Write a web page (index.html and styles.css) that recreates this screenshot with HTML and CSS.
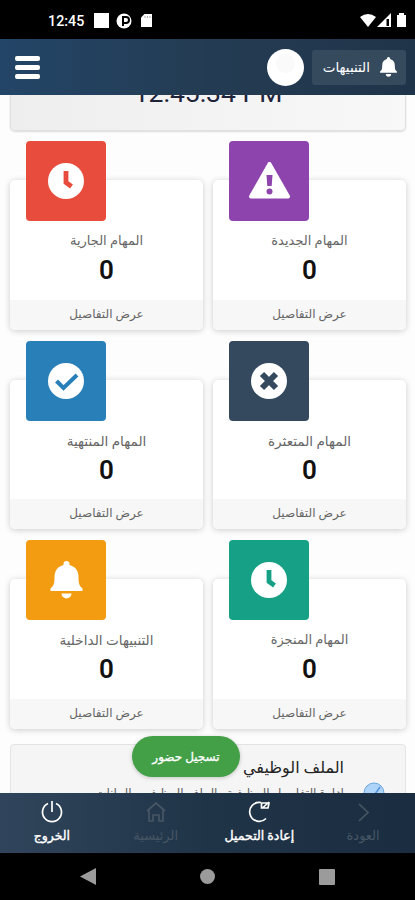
FILE: index.html
```html
<!DOCTYPE html>
<html lang="ar">
<head>
<meta charset="utf-8">
<title>لوحة المهام</title>
<link rel="stylesheet" href="styles.css">
</head>
<body>
<svg class="defs" width="0" height="0">
  <symbol id="bell" viewBox="0 0 32 38"><path d="M16 0a3 3 0 0 1 3 3v1c6 1.500 9 6 9 12 0 7 1 9 4 11.500V30H0v-2.500C3 25 4 23 4 16 4 10 7 5.500 13 4V3a3 3 0 0 1 3-3ZM11 32.500h10a5 5 0 0 1-10 0Z" fill="#fff"/></symbol>
  <symbol id="clock" viewBox="0 0 36 36"><circle cx="18" cy="18" r="18" fill="#fff"/><path d="M18 8v11.500l5.500 4" fill="none" stroke="currentColor" stroke-width="4.800"/></symbol>
</svg>
<div class="phone">
  <div class="status">
    <span class="time">12:45</span>
    <svg class="notes" width="60" height="18" viewBox="0 0 60 18"><path d="M1 1h15v15H1z" fill="#fff"/><circle cx="31" cy="9" r="7.500" fill="#fff"/><path d="M30 14V5h3a3 3 0 0 1 0 6h-3" fill="none" stroke="#000" stroke-width="2"/><path d="M51.500 2H59v13H48V5.500z" fill="#fff"/><path d="M52 4v2m2.500-2v2M57 4v2" stroke="#aaa" stroke-width="1"/></svg>
    <svg class="signal" width="48" height="16" viewBox="0 0 48 16"><path d="M0 4Q8-2 16 4L8 14z" fill="#fff"/><path d="M31 0v14H17z" fill="#fff"/><path d="M26.500 6h2.500v7h-2.500z" fill="#000"/><path d="M37 2h2V0h5v2h2v12h-9z" fill="#fff"/></svg>
  </div>
  <header class="topbar">
    <div class="menu"><i></i><i></i><i></i></div>
    <div class="avatar"><i></i></div>
    <div class="alerts" dir="rtl"><svg width="17" height="20"><use href="#bell"/></svg><span>التنبيهات</span></div>
  </header>
  <main class="content">
    <section class="clockbox"><span>12:45:34 PM</span></section>
    <section class="grid">
      <article class="card"><div class="tile red"><svg width="36" height="36"><use href="#clock"/></svg></div><p class="label" dir="rtl">المهام الجارية</p><b>0</b><a dir="rtl">عرض التفاصيل</a></article>
      <article class="card"><div class="tile purple"><svg width="43" height="38" viewBox="0 0 43 38"><path d="M21.500 2 40 34.500H3z" fill="#fff" stroke="#fff" stroke-width="4" stroke-linejoin="round"/><path d="M18.500 13h6l-.8 11h-4.400z" fill="currentColor"/><circle cx="21.500" cy="29.500" r="3" fill="currentColor"/></svg></div><p class="label" dir="rtl">المهام الجديدة</p><b>0</b><a dir="rtl">عرض التفاصيل</a></article>
      <article class="card"><div class="tile blue"><svg width="36" height="36" viewBox="0 0 36 36"><circle cx="18" cy="18" r="18" fill="#fff"/><path d="m8.500 18 7 7L29 12" fill="none" stroke="currentColor" stroke-width="4"/></svg></div><p class="label wide" dir="rtl">المهام المنتهية</p><b>0</b><a dir="rtl">عرض التفاصيل</a></article>
      <article class="card"><div class="tile navy"><svg width="36" height="36" viewBox="0 0 36 36"><circle cx="18" cy="18" r="18" fill="#fff"/><path d="m11 11 14 14m0-14L11 25" stroke="currentColor" stroke-width="6"/></svg></div><p class="label wide" dir="rtl">المهام المتعثرة</p><b>0</b><a dir="rtl">عرض التفاصيل</a></article>
      <article class="card"><div class="tile orange"><svg width="33" height="38"><use href="#bell"/></svg></div><p class="label wide" dir="rtl">التنبيهات الداخلية</p><b>0</b><a dir="rtl">عرض التفاصيل</a></article>
      <article class="card"><div class="tile green"><svg width="36" height="36"><use href="#clock"/></svg></div><p class="label" dir="rtl">المهام المنجزة</p><b>0</b><a dir="rtl">عرض التفاصيل</a></article>
    </section>
    <section class="profile" dir="rtl">
      <svg width="22" height="22" viewBox="0 0 22 22"><circle cx="11" cy="11" r="10" fill="#aed4fa" stroke="#6ba6df"/><path d="m5 12 5 3 7-10" fill="none" stroke="#5b9bd8" stroke-width="1.800"/></svg>
      <div><h2>الملف الوظيفي</h2><p>إدارة التفاصيل الوظيفية والملف الوظيفي والبيانات</p></div>
    </section>
    <button class="attend" dir="rtl">تسجيل حضور</button>
  </main>
  <nav class="tabs">
    <div><svg width="24" height="24" viewBox="0 0 24 24"><path d="M8 3.500a9.500 9.500 0 1 0 8 0M12 1v11"/></svg><span>الخروج</span></div>
    <div class="off"><svg width="24" height="24" viewBox="0 0 24 24"><path d="m3 11 9-8 9 8M5 9.500V21h4v-6h6v6h4V9.500"/></svg><span>الرئيسية</span></div>
    <div><svg width="24" height="24" viewBox="0 0 24 24"><path d="M14 2.500a9.500 9.500 0 1 0 5 16M14.500 8V3H22l-1 5zm1 0L22 2"/></svg><span>إعادة التحميل</span></div>
    <div class="off"><svg width="24" height="24" viewBox="0 0 24 24"><path d="m8 4 9 8.500L8 21"/></svg><span>العودة</span></div>
  </nav>
  <footer class="system">
    <svg width="16" height="18" viewBox="0 0 16 18"><path d="M16 0v17L0 8.500z" fill="#9b9b9b"/></svg><i class="home"></i><i class="recent"></i>
  </footer>
</div>
</body>
</html>
```
FILE: styles.css
```css
* { box-sizing: border-box; }
body { margin: 0; font-family: Roboto, "DejaVu Sans", sans-serif; background: #000; }
p, h2 { margin: 0; }
.defs { position: absolute; }
.phone { width: 415px; height: 900px; display: flex; flex-direction: column; overflow: hidden; }
.status { height: 39px; flex: none; background: #000; color: #fff; display: flex; align-items: center; padding: 2px 7px 0 48px; }
.time { font-size: 14.300px; font-weight: 500; width: 45px; }
.signal { margin-left: auto; }
.topbar { height: 56px; flex: none; display: flex; align-items: center; padding: 0 9px 0 15px; background: linear-gradient(90deg, #234567, #243c53 50%, #203449); }
.menu { width: 25px; display: grid; gap: 4px; margin-right: auto; }
.menu i { height: 5px; border-radius: 2px; background: #fff; }
.avatar { width: 37px; height: 37px; border-radius: 50%; background: #fff; margin-right: 8px; padding: 5px 9px; }
.avatar i { display: block; width: 19px; height: 19px; border-radius: 50%; background: #fafafa; }
.alerts { width: 94px; height: 35px; border-radius: 3px; background: #364a5d; color: #fff; display: flex; align-items: center; gap: 10px; padding-right: 9px; font-size: 13.500px; white-space: nowrap; }
.content { height: 698px; flex: none; position: relative; overflow: hidden; background: #fdfdfd; padding: 0 9px 0 10px; }
.clockbox { height: 36px; border: 1px solid #e0e0e0; border-top: 0; border-radius: 0 0 5px 5px; background: linear-gradient(90deg, #eee, #f8f8f8); box-shadow: 0 1px 2px #0002; overflow: hidden; color: #20243a; text-align: center; font-size: 26.500px; line-height: 28px; }
.clockbox span { display: block; margin-top: -16px; }
.grid { display: grid; grid-template-columns: 193px 193px; column-gap: 10px; row-gap: 50px; padding-top: 49px; }
.card { height: 149.500px; border-radius: 5px; background: #fff; box-shadow: 0 1px 6px #0003; display: flex; flex-direction: column; align-items: center; color: #666; }
.tile { width: 80px; height: 80px; margin: -39px 0 0 16px; align-self: flex-start; flex: none; border-radius: 4px; display: grid; place-items: center; background: currentColor; }
.red { color: #e74c3c; }
.purple { color: #8e44ad; }
.blue { color: #2980b9; }
.navy { color: #34495e; }
.orange { color: #f39c12; }
.green { color: #16a085; }
.label { font-size: 13px; line-height: 18px; margin-top: 11px; white-space: nowrap; }
.label.wide { font-size: 13.600px; }
.card b { color: #111; font-size: 26px; font-weight: 600; line-height: 30px; margin-top: 5px; }
.card a { width: 100%; height: 30px; margin-top: auto; background: #f7f7f7; border-radius: 0 0 5px 5px; text-align: center; font-size: 12px; line-height: 29px; }
.profile { height: 100px; margin-top: 15px; padding: 11px 20px 0 0; border: 1px solid #e3e3e3; border-radius: 4px; background: #f5f5f5; display: flex; gap: 19px; }
.profile svg { margin-top: 26px; flex: none; }
.profile h2 { color: #222; font-size: 16px; font-weight: 400; line-height: 24px; white-space: nowrap; }
.profile p { color: #666; font-size: 12.200px; line-height: 18px; margin-top: 4px; white-space: nowrap; }
.attend { position: absolute; left: 132px; top: 641px; width: 108px; height: 41px; border: 0; border-radius: 21px; background: #43a047; color: #fff; font: 12px Roboto, "DejaVu Sans", sans-serif; -webkit-text-stroke: .3px #fff; padding: 0; box-shadow: 0 1px 4px #0003; }
.tabs { height: 60px; flex: none; display: grid; grid-template-columns: repeat(4, 1fr); background: linear-gradient(90deg, #30455b, #203448 50%, #1b2d40); color: #fff; }
.tabs div { display: flex; flex-direction: column; align-items: center; padding-top: 7px; }
.tabs svg { fill: none; stroke: currentColor; stroke-width: 1.700; }
.tabs span { font-size: 12.500px; line-height: 18px; margin-top: 3px; white-space: nowrap; -webkit-text-stroke: .4px currentColor; }
.tabs .off { color: #465665; }
.tabs .off span { font-size: 13px; -webkit-text-stroke: 0; }
.system { height: 47px; flex: none; background: #000; display: flex; align-items: center; padding: 0 80px; justify-content: space-between; }
.home { width: 15px; height: 15px; border-radius: 50%; background: #9b9b9b; }
.recent { width: 16px; height: 16px; border-radius: 1px; background: #9b9b9b; }
```
